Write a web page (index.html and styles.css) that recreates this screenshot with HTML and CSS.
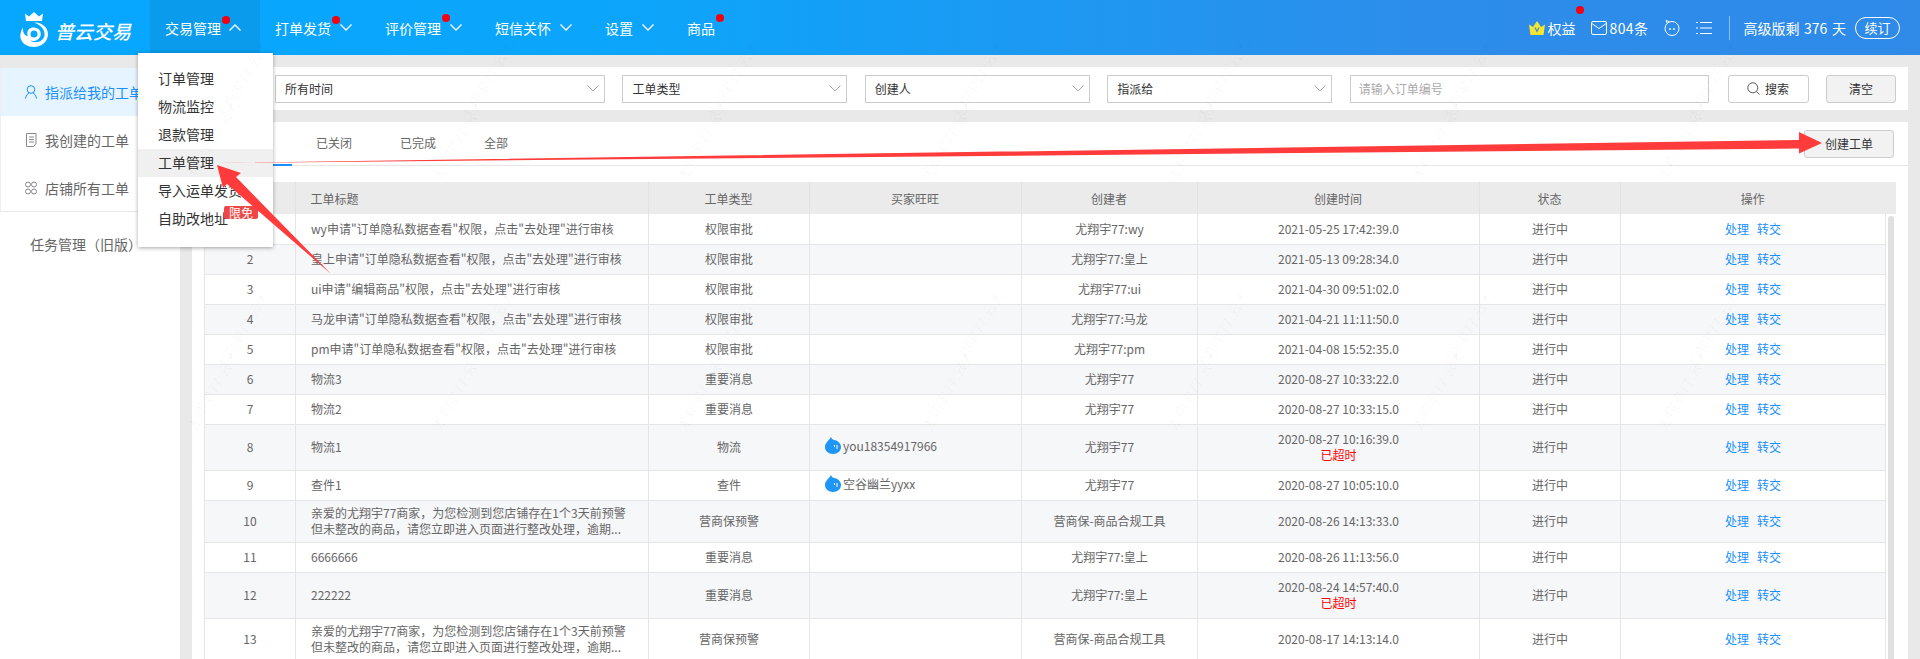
FILE: index.html
```html
<!DOCTYPE html>
<html lang="zh-CN">
<head>
<meta charset="utf-8">
<title>工单管理</title>
<link rel="stylesheet" href="styles.css">
</head>
<body>
<div class="app">
  <header class="topbar">
    <div class="logo">
      <svg class="logo-mark" width="30" height="36" viewBox="0 0 30 36">
        <path fill="#fff" d="M7 10 L6 2.5 L10 5.5 L15 1 L20 5.5 L24 2.5 L23 10 Z"/>
        <path fill="#fff" d="M15 11.500 C22 10.500 29 16 29 23 C29 31 22 36 15 36 C9 36 3 33 1.500 27 C1 24 1.500 20 4 16.500 C3.500 22 6 25 9 25 C7 21 9.500 17 13.500 16.500 C19 15.800 23 20 21.500 25 C20 29 15.500 31 11 29.500 C16 33 25 31 25.500 24 C26 17.500 20 13 15 11.500 Z"/>
        <circle cx="15" cy="23" r="3.500" fill="#07a7ff"/>
      </svg>
      <span class="logo-text">普云交易</span>
    </div>
    <nav class="nav">
      <div class="nav-item active">交易管理<i class="dot"></i>
        <svg class="chev chev-first" width="12" height="7" viewBox="0 0 12 7"><path d="M.5 6.500 6 1l5.500 5.500" fill="none" stroke="#fff" stroke-width="1.300"/></svg>
        <div class="dropdown">
          <a class="dd-item">订单管理</a>
          <a class="dd-item">物流监控</a>
          <a class="dd-item">退款管理</a>
          <a class="dd-item current">工单管理</a>
          <a class="dd-item">导入运单发货</a>
          <a class="dd-item">自助改地址<span class="badge">限免</span></a>
        </div>
      </div>
      <div class="nav-item">打单发货<i class="dot"></i>
        <svg class="chev" width="12" height="7" viewBox="0 0 12 7"><path d="M.5.5 6 6l5.500-5.500" fill="none" stroke="#fff" stroke-width="1.300"/></svg>
      </div>
      <div class="nav-item">评价管理<i class="dot dot-high"></i>
        <svg class="chev" width="12" height="7" viewBox="0 0 12 7"><path d="M.5.5 6 6l5.500-5.500" fill="none" stroke="#fff" stroke-width="1.300"/></svg>
      </div>
      <div class="nav-item">短信关怀
        <svg class="chev" width="12" height="7" viewBox="0 0 12 7"><path d="M.5.5 6 6l5.500-5.500" fill="none" stroke="#fff" stroke-width="1.300"/></svg>
      </div>
      <div class="nav-item nav-set">设置
        <svg class="chev" width="12" height="7" viewBox="0 0 12 7"><path d="M.5.5 6 6l5.500-5.500" fill="none" stroke="#fff" stroke-width="1.300"/></svg>
      </div>
      <div class="nav-item nav-goods">商品<i class="dot dot-goods"></i></div>
    </nav>
    <div class="top-right">
      <div class="tr-rights">
        <svg width="16" height="14" viewBox="0 0 16 14"><path fill="#f7e62f" d="M0 3.500 4 6 8 0l4 6 4-2.500L14.500 14h-13Z"/><path d="M6 6.500 8 10.500 10 6.500" fill="none" stroke="#3b8ad8" stroke-width="1.200"/></svg>
        <span>权益</span><i class="dot dot-rights"></i>
      </div>
      <div class="tr-mail">
        <svg width="16" height="14" viewBox="0 0 16 14"><rect x=".5" y=".5" width="15" height="13" rx="1.500" fill="none" stroke="#fff"/><path d="M.8 2.500 8 7.500l7.200-5" fill="none" stroke="#fff"/></svg>
        <span class="mail-count">804条</span>
      </div>
      <svg class="tr-icon" width="16" height="16" viewBox="0 0 16 16"><circle cx="8" cy="8.500" r="7" fill="none" stroke="#fff"/><path d="M3 3 2 .5 5.500 1.800" fill="none" stroke="#fff"/><circle cx="6" cy="9" r=".9" fill="#fff"/><circle cx="10" cy="9" r=".9" fill="#fff"/></svg>
      <svg class="tr-icon" width="16" height="14" viewBox="0 0 16 14"><path d="M4 1.500h12M4 7h12M4 12.500h12M0 1.500h2M0 7h2M0 12.500h2" stroke="#fff" fill="none"/></svg>
      <i class="tr-divider"></i>
      <span class="tr-remain">高级版剩 376 天</span>
      <span class="tr-renew">续订</span>
    </div>
  </header>

  <div class="main">
    <aside class="sidebar">
      <ul class="side-group">
        <li class="side-item on">
          <svg width="12" height="14" viewBox="0 0 12 14"><circle cx="6" cy="4.500" r="3.800" fill="none" stroke="#1890ff"/><path d="M.5 13.500C1 10 3 8.500 4 8.200M11.500 13.500C11 10 9 8.500 8 8.200" fill="none" stroke="#1890ff"/></svg>
          <span>指派给我的工单</span>
        </li>
        <li class="side-item">
          <svg width="12" height="14" viewBox="0 0 12 14"><path d="M1.500.5h9.500v10l-2.500 3h-7Z" fill="none" stroke="#888"/><path d="M4 4h5M4 6.500h5M4 9h5" stroke="#888"/></svg>
          <span>我创建的工单</span>
        </li>
        <li class="side-item">
          <svg width="12" height="14" viewBox="0 0 12 14"><g fill="none" stroke="#888"><circle cx="3" cy="3.500" r="2.500"/><circle cx="9" cy="3.500" r="2.500"/><circle cx="3" cy="10.500" r="2.500"/><circle cx="9" cy="10.500" r="2.500"/></g></svg>
          <span>店铺所有工单</span>
        </li>
      </ul>
      <div class="side-old">任务管理（旧版）</div>
    </aside>

    <section class="content">
      <div class="filters">
        <div class="select select-wide"><span>所有时间</span><svg width="12" height="7" viewBox="0 0 12 7"><path d="M.5.5 6 6l5.500-5.500" fill="none" stroke="#aaa"/></svg></div>
        <div class="select"><span>工单类型</span><svg width="12" height="7" viewBox="0 0 12 7"><path d="M.5.5 6 6l5.500-5.500" fill="none" stroke="#aaa"/></svg></div>
        <div class="select"><span>创建人</span><svg width="12" height="7" viewBox="0 0 12 7"><path d="M.5.5 6 6l5.500-5.500" fill="none" stroke="#aaa"/></svg></div>
        <div class="select"><span>指派给</span><svg width="12" height="7" viewBox="0 0 12 7"><path d="M.5.5 6 6l5.500-5.500" fill="none" stroke="#aaa"/></svg></div>
        <div class="search-input">请输入订单编号</div>
        <button class="btn btn-search"><svg width="13" height="13" viewBox="0 0 13 13"><circle cx="5.800" cy="5.800" r="5" fill="none" stroke="#555"/><path d="m9.500 9.500 3 3" stroke="#555"/></svg>搜索</button>
        <button class="btn btn-clear">清空</button>
      </div>

      <div class="panel">
        <div class="tabs">
          <span class="tab on">进行中</span>
          <span class="tab">已关闭</span>
          <span class="tab">已完成</span>
          <span class="tab">全部</span>
          <button class="btn btn-create">创建工单</button>
        </div>

        <table class="tbl tbl-head">
          <colgroup><col class="c1"><col class="c2"><col class="c3"><col class="c4"><col class="c5"><col class="c6"><col class="c7"><col class="c8h"></colgroup>
          <thead><tr><th></th><th class="left">工单标题</th><th>工单类型</th><th>买家旺旺</th><th>创建者</th><th>创建时间</th><th>状态</th><th class="ops-h">操作</th></tr></thead>
        </table>
        <div class="tbl-body">
          <table class="tbl">
            <colgroup><col class="c1"><col class="c2"><col class="c3"><col class="c4"><col class="c5"><col class="c6"><col class="c7"><col class="c8"></colgroup>
            <tbody>
              <tr><td>1</td><td class="left">wy申请"订单隐私数据查看"权限，点击"去处理"进行审核</td><td>权限审批</td><td></td><td>尤翔宇77:wy</td><td>2021-05-25 17:42:39.0</td><td>进行中</td><td class="ops"><a>处理</a><a>转交</a></td></tr>
              <tr><td>2</td><td class="left">皇上申请"订单隐私数据查看"权限，点击"去处理"进行审核</td><td>权限审批</td><td></td><td>尤翔宇77:皇上</td><td>2021-05-13 09:28:34.0</td><td>进行中</td><td class="ops"><a>处理</a><a>转交</a></td></tr>
              <tr><td>3</td><td class="left">ui申请"编辑商品"权限，点击"去处理"进行审核</td><td>权限审批</td><td></td><td>尤翔宇77:ui</td><td>2021-04-30 09:51:02.0</td><td>进行中</td><td class="ops"><a>处理</a><a>转交</a></td></tr>
              <tr><td>4</td><td class="left">马龙申请"订单隐私数据查看"权限，点击"去处理"进行审核</td><td>权限审批</td><td></td><td>尤翔宇77:马龙</td><td>2021-04-21 11:11:50.0</td><td>进行中</td><td class="ops"><a>处理</a><a>转交</a></td></tr>
              <tr><td>5</td><td class="left">pm申请"订单隐私数据查看"权限，点击"去处理"进行审核</td><td>权限审批</td><td></td><td>尤翔宇77:pm</td><td>2021-04-08 15:52:35.0</td><td>进行中</td><td class="ops"><a>处理</a><a>转交</a></td></tr>
              <tr><td>6</td><td class="left">物流3</td><td>重要消息</td><td></td><td>尤翔宇77</td><td>2020-08-27 10:33:22.0</td><td>进行中</td><td class="ops"><a>处理</a><a>转交</a></td></tr>
              <tr><td>7</td><td class="left">物流2</td><td>重要消息</td><td></td><td>尤翔宇77</td><td>2020-08-27 10:33:15.0</td><td>进行中</td><td class="ops"><a>处理</a><a>转交</a></td></tr>
              <tr class="tall"><td>8</td><td class="left">物流1</td><td>物流</td><td class="left"><span class="ww"><svg width="16" height="17" viewBox="0 0 16 17"><path fill="#1e96f5" d="M6 0C6.500 1.500 7.500 2.500 9 3C13 3.500 16 6.500 16 10C16 14 12.500 17 8 17C3.500 17 0 14 0 10C0 6 3.500 4 6 0Z"/><path d="M9.500 8v2M12 8v4" stroke="#fff"/></svg>you18354917966</span></td><td>尤翔宇77</td><td>2020-08-27 10:16:39.0<div class="late">已超时</div></td><td>进行中</td><td class="ops"><a>处理</a><a>转交</a></td></tr>
              <tr><td>9</td><td class="left">查件1</td><td>查件</td><td class="left"><span class="ww"><svg width="16" height="17" viewBox="0 0 16 17"><path fill="#1e96f5" d="M6 0C6.500 1.500 7.500 2.500 9 3C13 3.500 16 6.500 16 10C16 14 12.500 17 8 17C3.500 17 0 14 0 10C0 6 3.500 4 6 0Z"/><path d="M9.500 8v2M12 8v4" stroke="#fff"/></svg>空谷幽兰yyxx</span></td><td>尤翔宇77</td><td>2020-08-27 10:05:10.0</td><td>进行中</td><td class="ops"><a>处理</a><a>转交</a></td></tr>
              <tr class="two"><td>10</td><td class="left">亲爱的尤翔宇77商家，为您检测到您店铺存在1个3天前预警<br>但未整改的商品，请您立即进入页面进行整改处理，逾期...</td><td>营商保预警</td><td></td><td>营商保-商品合规工具</td><td>2020-08-26 14:13:33.0</td><td>进行中</td><td class="ops"><a>处理</a><a>转交</a></td></tr>
              <tr><td>11</td><td class="left">6666666</td><td>重要消息</td><td></td><td>尤翔宇77:皇上</td><td>2020-08-26 11:13:56.0</td><td>进行中</td><td class="ops"><a>处理</a><a>转交</a></td></tr>
              <tr class="tall"><td>12</td><td class="left">222222</td><td>重要消息</td><td></td><td>尤翔宇77:皇上</td><td>2020-08-24 14:57:40.0<div class="late">已超时</div></td><td>进行中</td><td class="ops"><a>处理</a><a>转交</a></td></tr>
              <tr class="two"><td>13</td><td class="left">亲爱的尤翔宇77商家，为您检测到您店铺存在1个3天前预警<br>但未整改的商品，请您立即进入页面进行整改处理，逾期...</td><td>营商保预警</td><td></td><td>营商保-商品合规工具</td><td>2020-08-17 14:13:14.0</td><td>进行中</td><td class="ops"><a>处理</a><a>转交</a></td></tr>
            </tbody>
          </table>
          <div class="scrollbar"><div class="thumb"></div></div>
        </div>
      </div>
    </section>
  </div>

  <div class="watermarks" aria-hidden="true">
    <div class="wm-row"><span>尤翔宇77:云大</span><span>尤翔宇77:云大</span><span>尤翔宇77:云大</span><span>尤翔宇77:云大</span><span>尤翔宇77:云大</span><span>尤翔宇77:云大</span><span>尤翔宇77:云大</span></div>
    <div class="wm-row alt"><span>尤翔宇77:云大</span><span>尤翔宇77:云大</span><span>尤翔宇77:云大</span><span>尤翔宇77:云大</span><span>尤翔宇77:云大</span><span>尤翔宇77:云大</span><span>尤翔宇77:云大</span></div>
    <div class="wm-row"><span>尤翔宇77:云大</span><span>尤翔宇77:云大</span><span>尤翔宇77:云大</span><span>尤翔宇77:云大</span><span>尤翔宇77:云大</span><span>尤翔宇77:云大</span><span>尤翔宇77:云大</span></div>
    <div class="wm-row alt"><span>尤翔宇77:云大</span><span>尤翔宇77:云大</span><span>尤翔宇77:云大</span><span>尤翔宇77:云大</span><span>尤翔宇77:云大</span><span>尤翔宇77:云大</span><span>尤翔宇77:云大</span></div>
  </div>

  <svg class="arrows" width="1920" height="659" viewBox="0 0 1920 659">
    <polygon fill="#ff3b3b" points="218,163 1799,140 1799,132 1822,143 1799,153.500 1799,148.500"/>
    <polygon fill="#ff3b3b" points="217,165 241,173 236,177 331,274 227,184 223,188"/>
  </svg>
</div>
</body>
</html>
```
FILE: styles.css
```css
* { box-sizing: border-box; }
html, body { margin: 0; padding: 0; }
body {
  font-family: "Noto Sans CJK SC", "Noto Sans", "Liberation Sans", sans-serif;
  font-size: 12px;
  color: #666;
  background: #e9e9e9;
}
.app { position: relative; width: 1920px; height: 659px; overflow: hidden; }

/* top bar */
.topbar {
  display: flex;
  align-items: stretch;
  height: 55px;
  color: #fff;
  font-size: 14px;
  background: linear-gradient(90deg, #07a7ff 0, #0ca5fb 33%, #2d8dea 75%, #2f8ae8 100%);
}
.logo { width: 150px; display: flex; align-items: center; padding: 5px 0 0 19px; }
.logo-mark { flex: none; margin-top: -3px; }
.logo-text { margin-left: 6px; font-size: 19px; font-weight: 500; font-style: italic; line-height: 1; white-space: nowrap; }
.nav { display: flex; align-items: stretch; }
.nav-item { position: relative; width: 110px; padding-left: 15px; display: flex; align-items: center; white-space: nowrap; }
.nav-item.active { background: #0a9bec; }
.nav-set { width: 82px; }
.nav-goods { width: 70px; }
.chev { margin-left: 9px; flex: none; }
.chev-first { margin-left: 8px; }
.dot { position: absolute; left: 72px; top: 16px; width: 8px; height: 8px; border-radius: 50%; background: #f5000f; }
.dot-high { top: 14px; }
.dot-goods { left: 44px; top: 14px; }

/* dropdown */
.dropdown {
  position: absolute;
  z-index: 5;
  left: -12px;
  top: 53px;
  width: 135px;
  height: 194px;
  padding-top: 12px;
  background: #fff;
  box-shadow: 0 1px 4px rgba(0, 0, 0, .35);
}
.dd-item { position: relative; display: block; height: 28px; line-height: 26px; padding-left: 20px; color: #333; }
.dd-item.current { background: #f0f0f0; }
.badge {
  position: absolute;
  left: 86px;
  top: 1px;
  width: 34px;
  height: 13px;
  line-height: 13px;
  text-align: center;
  font-size: 12px;
  border-radius: 2px;
  color: #fff;
  background: #ef4747;
}

.top-right { margin-left: auto; display: flex; align-items: center; padding-right: 20px; }
.tr-rights { position: relative; display: flex; align-items: center; gap: 2px; }
.tr-mail { display: flex; align-items: center; gap: 2px; margin-left: 16px; }
.mail-count { letter-spacing: .4px; }
.dot-rights { left: 47px; top: -12px; }
.tr-icon { margin-left: 16px; flex: none; }
.tr-divider { width: 1px; height: 24px; margin: 0 13px 0 17px; background: rgba(255, 255, 255, .45); }
.tr-remain { white-space: nowrap; word-spacing: 1.500px; }
.tr-renew {
  width: 45px;
  height: 22px;
  margin-left: 9px;
  line-height: 20px;
  text-align: center;
  border: 1px solid #fff;
  border-radius: 11px;
  font-size: 13px;
}

/* main */
.main { display: flex; height: 604px; }
.sidebar { width: 180px; margin-top: 13px; background: #fff; flex: none; }
.side-group { list-style: none; margin: 0; padding: 0; border-left: 1px solid #eee; border-bottom: 1px solid #e8e8e8; font-size: 14px; height: 144px; }
.side-item { height: 48px; display: flex; align-items: center; gap: 8px; padding-left: 24px; color: #666; white-space: nowrap; overflow: hidden; }
.side-item.on { color: #1890ff; background: #e6f4ff; }
.side-old { padding: 22px 0 0 30px; font-size: 14px; color: #666; }

.content { width: 1716px; margin: 12px 0 0 12px; }
.filters { display: flex; align-items: center; gap: 17.5px; height: 43px; padding-left: 83px; background: #fff; }
.select {
  width: 225px;
  height: 28px;
  padding: 0 5px 0 9px;
  display: flex;
  align-items: center;
  justify-content: space-between;
  border: 1px solid #ccc;
  background: #fff;
  color: #333;
}
.select-wide { width: 330px; }
.search-input { width: 359px; height: 28px; line-height: 26px; padding-left: 8px; border: 1px solid #ccc; color: #aaa; }
.btn {
  font: inherit;
  height: 28px;
  padding: 0;
  border: 1px solid #ccc;
  border-radius: 3px;
  color: #333;
  background: #f2f2f2;
}
.btn-search { width: 81px; margin-left: 1.500px; background: #fff; display: flex; align-items: center; justify-content: center; gap: 5px; }
.btn-clear { width: 70px; margin-right: 12px; }

.panel { margin-top: 12px; height: 537px; background: #fff; overflow: hidden; }
.tabs { position: relative; display: flex; align-items: center; height: 44px; padding-left: 16px; border-bottom: 1px solid #e6e6e6; }
.tab { padding: 0 24px; height: 43px; line-height: 42px; text-align: center; color: #666; }
.tab.on { border-bottom: 2px solid #1890ff; height: 44px; }
.btn-create { margin-left: auto; margin-right: 14px; width: 90px; }

/* table */
.tbl { border-collapse: collapse; table-layout: fixed; width: 1681px; }
.tbl-head { width: 1692px; margin: 16px 0 0 12px; background: #ebebeb; }
.c1 { width: 91px; } .c2 { width: 353px; } .c3 { width: 161px; } .c4 { width: 212px; }
.c5 { width: 176px; } .c6 { width: 282px; } .c7 { width: 141px; } .c8 { width: 265px; } .c8h { width: 276px; }
.tbl th { height: 32px; font-weight: 400; color: #666; text-align: center; border-right: 1px solid #e2e2e2; padding: 0; }
.tbl th:last-child { border-right: 0; }
.tbl th.ops-h { padding-right: 11px; }
.tbl-body { display: flex; align-items: flex-start; margin-left: 12px; width: 1692px; }
.tbl td { height: 30px; line-height: 16px; text-align: center; padding: 0; border: 1px solid #e5e5e5; border-top: 0; border-left: 0; color: #666; white-space: nowrap; }
.tbl td:first-child { border-left: 1px solid #e5e5e5; }
.tbl th.left, .tbl td.left { text-align: left; padding: 0 15px; }
.tbl tbody tr:nth-child(even) td { background: #f6f7f9; }
.tbl tr.tall td { height: 46px; }
.tbl tr.two td { height: 42px; }
.ww { display: inline-flex; align-items: center; gap: 2px; white-space: nowrap; }
.late { color: #f00; }
.ops a { color: #1890ff; margin: 0 4px; }
.scrollbar { width: 11px; flex: none; padding: 2px 2px 0 2px; background: #fff; }
.thumb { width: 6px; height: 460px; border-radius: 3px 3px 0 0; background: #e0e0e0; }

/* watermarks and annotation overlay */
.watermarks { position: absolute; z-index: 6; left: 0; top: 0; width: 1920px; height: 659px; padding-top: 40px; pointer-events: none; overflow: hidden; display: grid; grid-template-rows: 60px 190px 60px 190px; }
.wm-row { display: flex; margin-left: 120px; padding-top: 30px; }
.wm-row.alt { margin-left: 90px; }
.wm-row span { flex: none; width: 245px; height: 20px; text-align: center; font-size: 14px; color: rgba(0, 0, 0, .035); transform: rotate(-60deg); white-space: nowrap; }
.arrows { position: absolute; z-index: 7; left: 0; top: 0; pointer-events: none; }
```
